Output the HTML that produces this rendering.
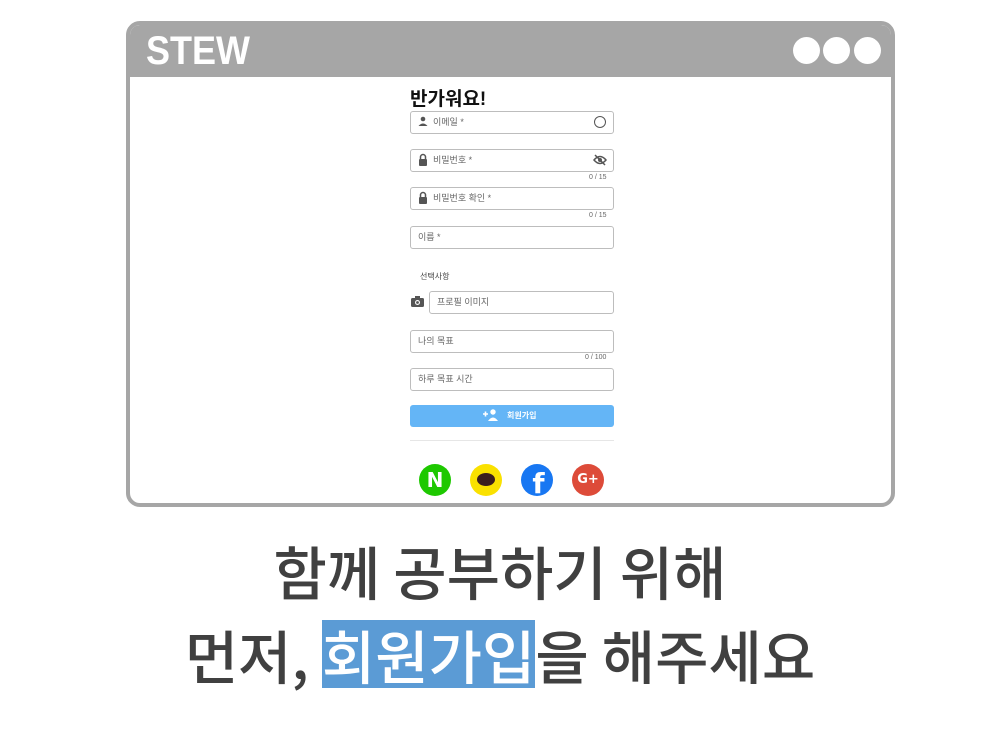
<!DOCTYPE html>
<html><head><meta charset="utf-8"><style>
*{margin:0;padding:0;box-sizing:border-box}
body{width:1000px;height:750px;background:#fff;position:relative;font-family:"Liberation Sans","Noto Sans CJK KR",sans-serif;overflow:hidden}
.win{position:absolute;left:126px;top:21px;width:769px;height:486px;border:4px solid #a6a6a6;border-radius:14px;overflow:hidden;background:#fff}
.hdr{position:absolute;left:0;top:0;right:0;height:52px;background:#a6a6a6}
.logo{position:absolute;left:16px;top:4px;color:#fff;font-size:40px;font-weight:bold;font-family:"Liberation Sans",sans-serif;transform:scaleX(0.9);transform-origin:left}
.dot{position:absolute;top:12px;width:27px;height:27px;border-radius:50%;background:#fff}
.a{position:absolute}
.f{position:absolute;left:410px;width:204px;height:23px;border:1px solid #bdbdbd;border-radius:3px;font-size:9px;color:#666;padding-left:7px;line-height:21px}
.c{position:absolute;font-size:7px;color:#666}
.soc{position:absolute;top:464px;width:32px;height:32px;border-radius:50%}
.big{position:absolute;left:0;width:1000px;text-align:center;font-size:58px;line-height:68px;color:#404040;font-family:"Noto Sans CJK KR",sans-serif;font-weight:500;white-space:nowrap}
.hl{display:inline-block;height:68px;line-height:68px;vertical-align:top;color:#fff;background:#5b9bd5}
</style></head><body>
<div class="win"><div class="hdr"><div class="logo">STEW</div>
<div class="dot" style="left:663px"></div><div class="dot" style="left:693px"></div><div class="dot" style="left:724px"></div></div></div>
<div class="a" style="left:410px;top:84px;font-size:19px;font-weight:bold;color:#111">반가워요!</div>
<div class="f" style="top:111px;padding-left:22px">이메일 *</div>
<svg class="a" style="left:418px;top:116px" width="10" height="10" viewBox="0 0 10 10"><circle cx="5" cy="3" r="2.3" fill="#555"/><path d="M0.5 10 Q5 5 9.5 10Z" fill="#555"/></svg>
<div class="a" style="left:594px;top:116px;width:12px;height:12px;border:1.3px solid #555;border-radius:50%"></div>
<div class="f" style="top:149px;padding-left:22px">비밀번호 *</div>
<div class="c" style="left:589px;top:174px">0 / 15</div>
<div class="f" style="top:187px;padding-left:22px">비밀번호 확인 *</div>
<div class="c" style="left:589px;top:212px">0 / 15</div>
<svg class="a" style="left:418px;top:153px" width="10" height="13" viewBox="0 0 10 13"><path d="M2.5 6V4a2.5 2.5 0 015 0v2" stroke="#555" stroke-width="1.5" fill="none"/><rect x="1" y="6" width="8" height="7" rx="1" fill="#555"/></svg>
<svg class="a" style="left:418px;top:191px" width="10" height="13" viewBox="0 0 10 13"><path d="M2.5 6V4a2.5 2.5 0 015 0v2" stroke="#555" stroke-width="1.5" fill="none"/><rect x="1" y="6" width="8" height="7" rx="1" fill="#555"/></svg>
<svg class="a" style="left:593px;top:154px" width="14" height="12" viewBox="0 0 14 12"><path d="M1 6Q7 -1 13 6Q7 13 1 6Z" fill="none" stroke="#555" stroke-width="1.5"/><circle cx="7" cy="6" r="2" fill="#555"/><path d="M2 1L12 11" stroke="#555" stroke-width="1.5"/></svg>
<div class="f" style="top:226px">이름 *</div>
<div class="a" style="left:420px;top:271px;font-size:8px;color:#444">선택사항</div>
<svg class="a" style="left:411px;top:296px" width="13" height="11" viewBox="0 0 13 11"><rect x="0" y="2" width="13" height="9" rx="1.5" fill="#555"/><rect x="4" y="0" width="5" height="3" fill="#555"/><circle cx="6.5" cy="6.5" r="2.5" fill="#fff"/><circle cx="6.5" cy="6.5" r="1.4" fill="#555"/></svg>
<div class="f" style="top:291px;left:429px;width:185px">프로필 이미지</div>
<div class="f" style="top:330px">나의 목표</div>
<div class="c" style="left:585px;top:354px">0 / 100</div>
<div class="f" style="top:368px">하루 목표 시간</div>
<div class="a" style="left:410px;top:405px;width:204px;height:22px;background:#64b5f6;border-radius:3px;color:#fff;font-size:8px;font-weight:bold;line-height:22px;padding-left:97px">회원가입</div>
<svg class="a" style="left:483px;top:409px" width="15" height="12" viewBox="0 0 15 12"><path d="M0 5H5M2.5 2.5V7.5" stroke="#fff" stroke-width="1.6"/><circle cx="10" cy="3" r="2.7" fill="#fff"/><path d="M5 12Q10 5 15 12Z" fill="#fff"/></svg>
<div class="a" style="left:410px;top:440px;width:204px;height:1px;background:#e6e6e6"></div>
<div class="soc" style="left:419px;background:#1ec800;color:#fff;font-weight:900;font-size:20px;text-align:center;line-height:32px;font-family:'DejaVu Sans',sans-serif">N</div>
<div class="soc" style="left:470px;background:#fae100"><div class="a" style="left:7px;top:9px;width:18px;height:13px;border-radius:50%;background:#3b1e1e"></div></div>
<div class="soc" style="left:521px;background:#1877f2;overflow:hidden;color:#fff;font-weight:bold;font-size:28px;text-align:center;line-height:40px;font-family:'DejaVu Sans',sans-serif;padding-left:3px">f</div>
<div class="soc" style="left:572px;background:#dd4b39;color:#fff;font-weight:bold;font-size:13px;text-align:center;line-height:32px;font-family:'DejaVu Sans',sans-serif">G+</div>
<div class="big" style="top:536px">함께 공부하기 위해</div>
<div class="big" style="top:620px">먼저, <span class="hl">회원가입</span>을 해주세요</div>
</body></html>
